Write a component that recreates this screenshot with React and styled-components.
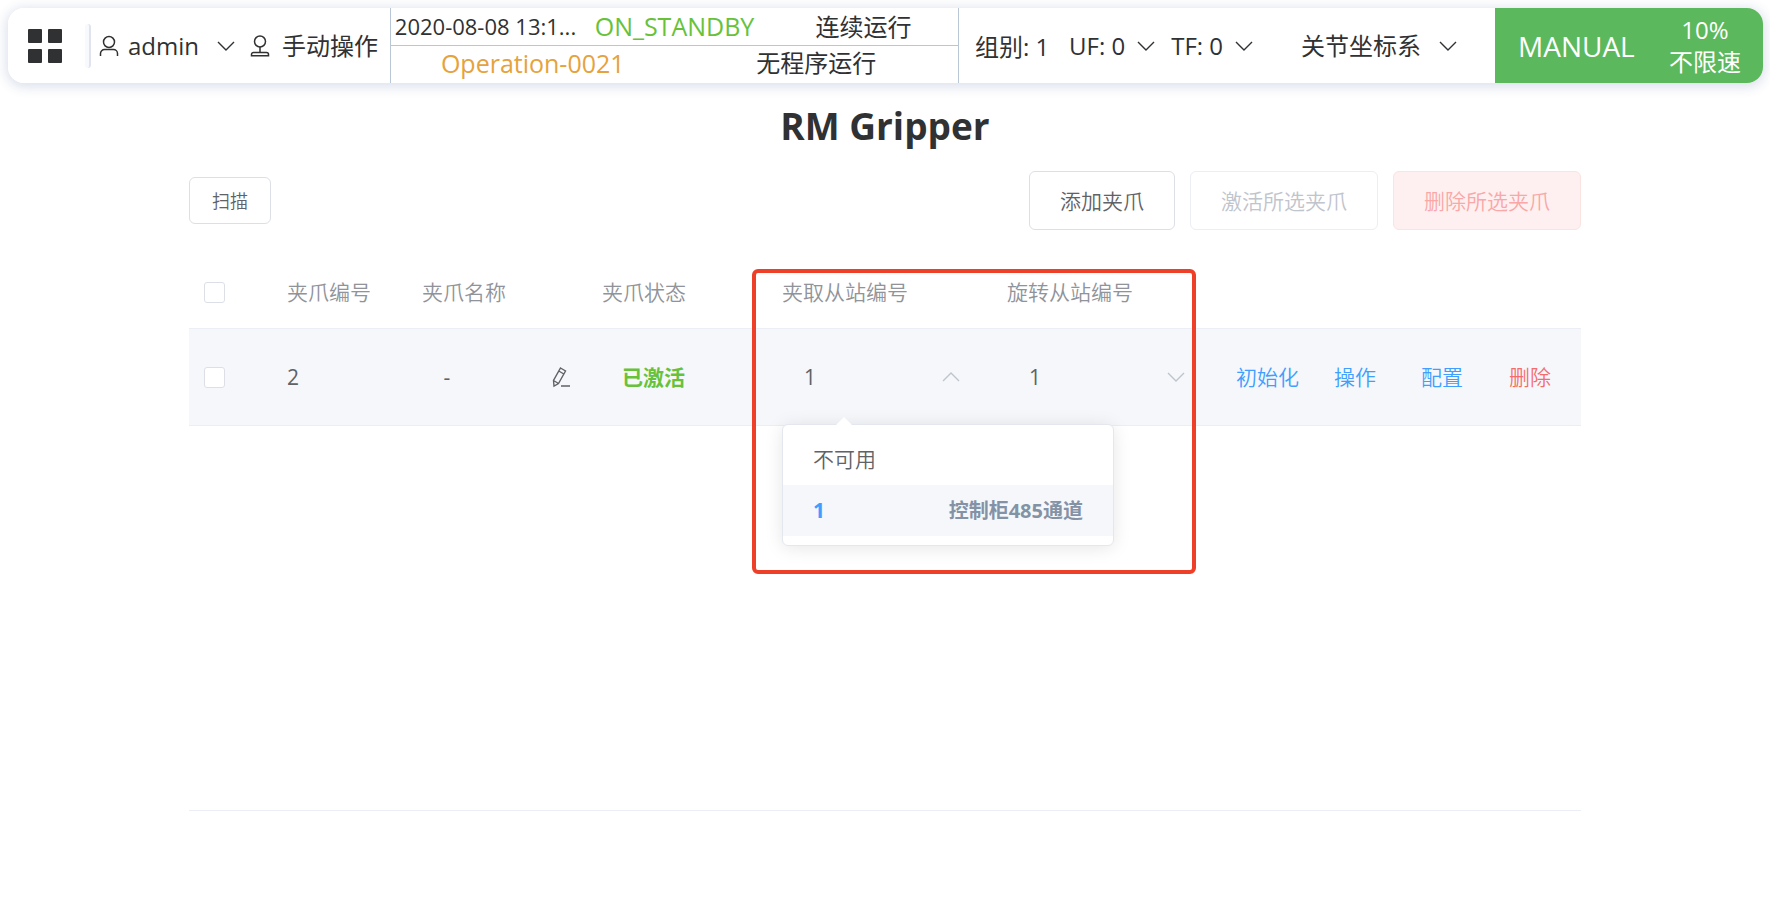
import React, { useState } from "react";
import styled, { createGlobalStyle } from "styled-components";

const GlobalStyle = createGlobalStyle`
  * {
    box-sizing: border-box;
  }
  body {
    margin: 0;
    background: #fff;
    color: #303133;
    font-family: "Open Sans", "Noto Sans CJK SC", sans-serif;
  }
  button,
  input,
  select {
    margin: 0;
    font-family: inherit;
  }
`;

const Page = styled.div`
  padding: 8px 7px 0 8px;
`;

const TopBar = styled.header`
  display: grid;
  grid-template-columns: 382px 569px 1fr 268px;
  border-radius: 16px;
  background: #fff;
  overflow: hidden;
  color: #303133;
`;

const TopBarShadow = styled.div`
  border-radius: 16px;
  box-shadow: 0 2px 12px 2px rgba(30, 60, 130, 0.16);
`;

const UserArea = styled.div`
  display: flex;
  align-items: center;
  padding-left: 20px;
`;

const PlainButton = styled.button`
  display: flex;
  align-items: center;
  padding: 0;
  border: none;
  background: none;
  color: inherit;
  font-size: ${props => props.$size || "24px"};
  line-height: 32px;
  white-space: nowrap;
`;

const Divider = styled.span`
  width: 6px;
  height: 44px;
  margin: 0 8px 0 23px;
  border-right: 2px solid #dfe4ee;
  border-radius: 3px;
  background: #f8f9fc;
`;

const AdminButton = styled(PlainButton)`
  gap: 9px;
  margin-right: 15px;
`;

const AdminName = styled.span`
  width: 80px;
  text-align: left;
`;

const ManualButton = styled(PlainButton)`
  gap: 12px;
`;

const StatusArea = styled.div`
  border-left: 1px solid #b9c6d6;
  border-right: 1px solid #b9c6d6;
`;

const StatusRow = styled.div`
  display: grid;
  grid-template-columns: repeat(${props => props.$columns}, 1fr);
  line-height: 37px;
  text-align: center;
  & + & {
    padding-bottom: 3px;
    border-top: 1px solid #b9c6d6;
    line-height: 34px;
  }
`;

const StatusText = styled.span`
  color: ${props => props.color || "inherit"};
  font-size: ${props => props.$size || "24px"};
  white-space: nowrap;
`;

const CoordArea = styled.div`
  display: flex;
  align-items: center;
  padding-left: 16px;
  font-size: 24px;
`;

const GroupLabel = styled.span`
  width: 94px;
  white-space: nowrap;
`;

const CoordButton = styled(PlainButton)`
  gap: ${props => props.$gap || "12px"};
  margin-right: ${props => props.$space || "16px"};
`;

const ModeArea = styled.div`
  display: flex;
  align-items: center;
  padding: 0 22px 0 23px;
  justify-content: space-between;
  background: #5cb85c;
  color: #fff;
`;

const ModeName = styled.span`
  font-size: 28px;
  line-height: 32px;
`;

const Speed = styled.span`
  display: flex;
  flex-direction: column;
  align-items: center;
  font-size: 24px;
  line-height: 32px;
`;

const Main = styled.main`
  padding: 18px 182px 0 181px;
`;

const Title = styled.h1`
  margin: 0 0 20px;
  font-size: 37px;
  line-height: 50px;
  text-align: center;
`;

const Toolbar = styled.div`
  display: flex;
  align-items: center;
  gap: 15px;
  margin-bottom: 28px;
`;

const Button = styled.button`
  height: 59px;
  padding: 0 30px;
  border: 1px solid #dcdfe6;
  border-radius: 6px;
  background: #fff;
  color: #606266;
  font-size: 21px;
  font-weight: 350;
  line-height: 28px;
  &:disabled {
    border-color: #ebeef5;
    color: #c0c4cc;
  }
`;

const ScanButton = styled(Button)`
  height: 47px;
  margin-right: auto;
  padding: 0 22px;
  font-size: 18px;
`;

const DangerButton = styled(Button)`
  &:disabled {
    border-color: #fde2e2;
    background: #fef0f0;
    color: #f9a7a7;
  }
`;

const TableArea = styled.section`
  position: relative;
  min-height: 553px;
  border-bottom: 1px solid #ebeef5;
`;

const Table = styled.table`
  width: 100%;
  table-layout: fixed;
  border-collapse: separate;
  border-spacing: 0;
  color: #606266;
  font-size: 21px;
  line-height: 30px;
`;

const HeadCell = styled.th`
  width: ${props => props.width || "auto"};
  height: 71px;
  padding: 0 15px 2px;
  border-bottom: 1px solid #ebeef5;
  color: #909399;
  font-weight: 350;
  text-align: left;
  white-space: nowrap;
`;

const Cell = styled.td`
  position: relative;
  height: 97px;
  padding: 0 15px;
  border-bottom: 1px solid #ebeef5;
  background: #f5f7fa;
`;

const CheckBox = styled.input`
  display: block;
  appearance: none;
  width: 21px;
  height: 21px;
  border: 1px solid #dcdfe6;
  border-radius: 3px;
  background: #fff;
  &:checked {
    border-color: #409eff;
    background: #409eff;
  }
`;

const NameBox = styled.div`
  display: flex;
  align-items: center;
  justify-content: space-between;
`;

const Name = styled.span`
  width: 50px;
  text-align: center;
`;

const State = styled.div`
  padding-left: 20px;
  color: #67c23a;
  font-weight: 700;
`;

const SelectBox = styled.div`
  display: flex;
  align-items: center;
  width: 178px;
  color: #c0c4cc;
`;

const Select = styled.select`
  flex: 1;
  appearance: none;
  margin-right: -44px;
  padding: 0 44px 0 22px;
  border: none;
  outline: none;
  background: none;
  color: #606266;
  font-size: 21px;
  line-height: 36px;
`;

const Actions = styled.div`
  display: grid;
  grid-template-columns: 98px 87px 88px auto;
  padding-left: 4px;
`;

const ActionButton = styled(PlainButton)`
  color: ${props => props.color || "#409eff"};
  font-weight: 350;
`;

const Popper = styled.div`
  position: absolute;
  z-index: 2;
  top: 95px;
  left: 15px;
  width: 332px;
  padding: 9px 0;
  border: 1px solid #e4e7ed;
  border-radius: 6px;
  background: #fff;
  box-shadow: 0 2px 18px rgba(0, 0, 0, 0.1);
  &::before {
    content: "";
    position: absolute;
    top: -8px;
    left: 53px;
    border: 8px solid transparent;
    border-top: none;
    border-bottom-color: #fff;
  }
`;

const OptionList = styled.ul`
  margin: 0;
  padding: 0;
  list-style: none;
`;

const Option = styled.li`
  display: flex;
  justify-content: space-between;
  padding: 0 30px;
  background: ${props => (props.$selected ? "#f5f7fa" : "#fff")};
  color: ${props => (props.$selected ? "#409eff" : "#606266")};
  font-weight: ${props => (props.$selected ? 700 : 350)};
  line-height: 51px;
`;

const OptionNote = styled.span`
  color: #8492a6;
  font-size: 20px;
`;

const Highlight = styled.div`
  position: absolute;
  z-index: 3;
  top: 11px;
  left: 563px;
  width: 444px;
  height: 305px;
  border: 4px solid #ee4028;
  border-radius: 6px;
  pointer-events: none;
`;

const GridIcon = () => (
  <svg width="34" height="34" viewBox="0 0 34 34" fill="#303133">
    <rect width="14" height="14" rx="1" />
    <rect x="20" width="14" height="14" rx="1" />
    <rect y="20" width="14" height="14" rx="1" />
    <rect x="20" y="20" width="14" height="14" rx="1" />
  </svg>
);

const UserIcon = () => (
  <svg width="20" height="22" viewBox="0 0 20 22" fill="none" stroke="currentColor" strokeWidth="1.5">
    <circle cx="10" cy="7" r="5.5" />
    <path d="M1.5 21v-2.5a4 4 0 0 1 4-4h9a4 4 0 0 1 4 4V21" />
  </svg>
);

const JoystickIcon = () => (
  <svg width="20" height="22" viewBox="0 0 20 22" fill="none" stroke="currentColor" strokeWidth="1.5">
    <circle cx="10" cy="6.500" r="5.500" />
    <path d="M10 12v5.500M1.500 20.800v-1.300a2 2 0 0 1 2-2h13a2 2 0 0 1 2 2v1.300z" />
  </svg>
);

const Chevron = ({ up }) => (
  <svg width="18" height="10" viewBox="0 0 18 10" fill="none" stroke="currentColor" strokeWidth="1.4">
    <path d={up ? "M1 9l8-8 8 8" : "M1 1l8 8 8-8"} />
  </svg>
);

const PencilIcon = () => (
  <svg width="20" height="22" viewBox="0 0 20 22" fill="none" stroke="currentColor" strokeWidth="1.4">
    <path d="M8.500 2l5 3-7 12.500-4.500 2.500-.5-5.500zM6.800 5l5 3M1.500 14.500l5 3M9 20h9" />
  </svg>
);

const columns = [
  { label: "夹爪编号", width: "135px" },
  { label: "夹爪名称", width: "180px" },
  { label: "夹爪状态", width: "180px" },
  { label: "夹取从站编号", width: "225px" },
  { label: "旋转从站编号", width: "225px" },
];

const options = [
  { value: "0", label: "不可用" },
  { value: "1", label: "1", note: "控制柜485通道" },
];

const StationSelect = ({ label, value, onChange, open }) => (
  <SelectBox>
    <Select aria-label={label} value={value} onChange={e => onChange(e.target.value)}>
      {options.map(item => (
        <option key={item.value} value={item.value}>
          {item.label}
        </option>
      ))}
    </Select>
    <Chevron up={open} />
  </SelectBox>
);

const Header = () => (
  <TopBarShadow>
    <TopBar>
      <UserArea>
        <PlainButton aria-label="菜单">
          <GridIcon />
        </PlainButton>
        <Divider />
        <AdminButton>
          <UserIcon />
          <AdminName>admin</AdminName>
          <Chevron />
        </AdminButton>
        <ManualButton>
          <JoystickIcon />
          手动操作
        </ManualButton>
      </UserArea>
      <StatusArea>
        <StatusRow $columns={3}>
          <StatusText $size="22px">2020-08-08 13:1...</StatusText>
          <StatusText $size="25px" color="#67c23a">
            ON_STANDBY
          </StatusText>
          <StatusText>连续运行</StatusText>
        </StatusRow>
        <StatusRow $columns={2}>
          <StatusText $size="25px" color="#e6a23c">
            Operation-0021
          </StatusText>
          <StatusText>无程序运行</StatusText>
        </StatusRow>
      </StatusArea>
      <CoordArea>
        <GroupLabel>组别: 1</GroupLabel>
        <CoordButton>
          UF: 0 <Chevron />
        </CoordButton>
        <CoordButton $space="48px">
          TF: 0 <Chevron />
        </CoordButton>
        <CoordButton $gap="18px">
          关节坐标系 <Chevron />
        </CoordButton>
      </CoordArea>
      <ModeArea>
        <ModeName>MANUAL</ModeName>
        <Speed>
          <span>10%</span>
          <span>不限速</span>
        </Speed>
      </ModeArea>
    </TopBar>
  </TopBarShadow>
);

const App = () => {
  const [checked, setChecked] = useState(false);
  const [grip, setGrip] = useState("1");
  const [rotate, setRotate] = useState("1");

  const handleCheck = e => setChecked(e.target.checked);

  return (
    <Page>
      <GlobalStyle />
      <Header />
      <Main>
        <Title>RM Gripper</Title>
        <Toolbar>
          <ScanButton>扫描</ScanButton>
          <Button>添加夹爪</Button>
          <Button disabled={!checked}>激活所选夹爪</Button>
          <DangerButton disabled={!checked}>删除所选夹爪</DangerButton>
        </Toolbar>
        <TableArea>
          <Table>
            <thead>
              <tr>
                <HeadCell width="83px">
                  <CheckBox type="checkbox" aria-label="全选" checked={checked} onChange={handleCheck} />
                </HeadCell>
                {columns.map(item => (
                  <HeadCell key={item.label} width={item.width}>
                    {item.label}
                  </HeadCell>
                ))}
                <HeadCell />
              </tr>
            </thead>
            <tbody>
              <tr>
                <Cell>
                  <CheckBox type="checkbox" aria-label="选择" checked={checked} onChange={handleCheck} />
                </Cell>
                <Cell>2</Cell>
                <Cell>
                  <NameBox>
                    <Name>-</Name>
                    <PlainButton aria-label="编辑">
                      <PencilIcon />
                    </PlainButton>
                  </NameBox>
                </Cell>
                <Cell>
                  <State>已激活</State>
                </Cell>
                <Cell>
                  <StationSelect label="夹取从站编号" value={grip} onChange={setGrip} open />
                  <Popper>
                    <OptionList role="listbox" aria-label="夹取从站编号">
                      {options.map(item => (
                        <Option
                          key={item.value}
                          role="option"
                          aria-selected={grip === item.value}
                          $selected={grip === item.value}
                          onClick={() => setGrip(item.value)}
                        >
                          {item.label}
                          {item.note && <OptionNote>{item.note}</OptionNote>}
                        </Option>
                      ))}
                    </OptionList>
                  </Popper>
                </Cell>
                <Cell>
                  <StationSelect label="旋转从站编号" value={rotate} onChange={setRotate} />
                </Cell>
                <Cell>
                  <Actions>
                    <ActionButton $size="21px">初始化</ActionButton>
                    <ActionButton $size="21px">操作</ActionButton>
                    <ActionButton $size="21px">配置</ActionButton>
                    <ActionButton $size="21px" color="#f56c6c">
                      删除
                    </ActionButton>
                  </Actions>
                </Cell>
              </tr>
            </tbody>
          </Table>
          <Highlight />
        </TableArea>
      </Main>
    </Page>
  );
};

export default App;
